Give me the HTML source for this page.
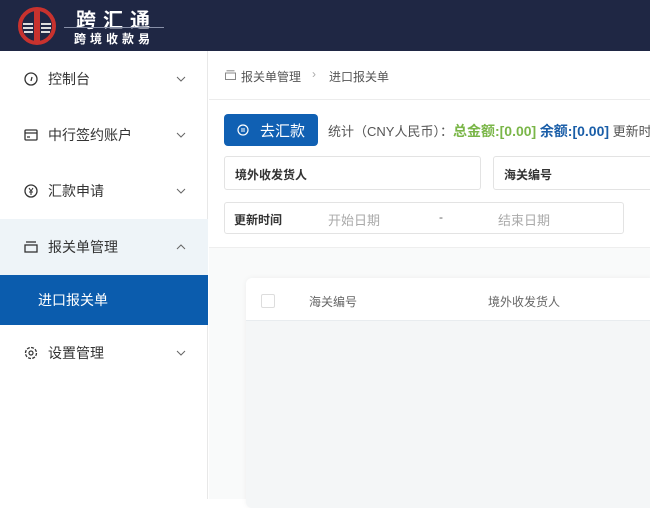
<!DOCTYPE html>
<html><head><meta charset="utf-8"><style>
*{margin:0;padding:0;box-sizing:border-box}
body{width:650px;height:499px;overflow:hidden;font-family:"Liberation Sans","Noto Sans CJK SC",sans-serif;background:#fff;position:relative;color:#333}
.hdr{position:absolute;left:0;top:0;width:650px;height:51px;background:#1f2744}
.side{position:absolute;left:0;top:51px;width:208px;height:448px;background:#fff;border-right:1px solid #e8e8e8}
.it{position:absolute;left:0;width:208px;height:56px;font-size:14px;color:#333}
.it .ic{position:absolute;left:24px;top:50%;transform:translateY(-50%)}
.it .t{position:absolute;left:48px;top:50%;transform:translateY(-50%)}
.it .ar{position:absolute;left:176px;top:50%;transform:translateY(-50%)}
.abs{position:absolute}
.inp{position:absolute;border:1px solid #e3e3e3;border-radius:3px;background:#fff;font-size:12px}
</style></head><body>
<div class="hdr">
<svg class="abs" style="left:17px;top:6px" width="40" height="40" viewBox="0 0 40 40"><circle cx="20" cy="20" r="17" fill="none" stroke="#c8322e" stroke-width="4"/><rect x="17" y="5" width="6" height="30" fill="#c8322e"/><path d="M6 18h10M6 22h10M24 18h10M24 22h10M7 26h9M24 26h9" stroke="#ddd" stroke-width="2"/></svg>
<div class="abs" style="left:76px;top:4px;color:#fff;font-size:20px;font-weight:bold;letter-spacing:7px">跨汇通</div>
<div class="abs" style="left:64px;top:27px;width:100px;height:1px;background:#8890a8"></div>
<div class="abs" style="left:74px;top:30px;color:#fff;font-size:12px;font-weight:bold;letter-spacing:4px">跨境收款易</div>
</div>
<div class="side">
<div class="it" style="top:0"><svg class="ic" width="14" height="14" viewBox="0 0 14 14"><circle cx="7" cy="7" r="6" fill="none" stroke="#333" stroke-width="1.3"/><path d="M7 9l1-4" stroke="#333" stroke-width="1.3"/></svg><span class="t">控制台</span><svg class="ar" width="10" height="6"><path d="M1 1l4 4 4-4" fill="none" stroke="#666"/></svg></div>
<div class="it" style="top:56px"><svg class="ic" width="14" height="12" viewBox="0 0 14 12"><rect x="1" y="1" width="12" height="10" rx="1" fill="none" stroke="#333" stroke-width="1.3"/><path d="M1 4h12M3 8h3" stroke="#333" stroke-width="1.3"/></svg><span class="t">中行签约账户</span><svg class="ar" width="10" height="6"><path d="M1 1l4 4 4-4" fill="none" stroke="#666"/></svg></div>
<div class="it" style="top:112px"><svg class="ic" width="14" height="14" viewBox="0 0 14 14"><circle cx="7" cy="7" r="6" fill="none" stroke="#333" stroke-width="1.3"/><path d="M5 4l2 3 2-3M7 7v4M5 8h4" stroke="#333" stroke-width="1.1" fill="none"/></svg><span class="t">汇款申请</span><svg class="ar" width="10" height="6"><path d="M1 1l4 4 4-4" fill="none" stroke="#666"/></svg></div>
<div class="it" style="top:168px;background:#eef4f8"><svg class="ic" width="14" height="12" viewBox="0 0 14 12"><rect x="1" y="4" width="12" height="7" fill="none" stroke="#333" stroke-width="1.3"/><path d="M2 1h10" stroke="#333" stroke-width="1.3"/></svg><span class="t">报关单管理</span><svg class="ar" width="10" height="6"><path d="M1 5l4-4 4 4" fill="none" stroke="#666"/></svg></div>
<div class="it" style="top:224px;height:50px;background:#0b5cad;color:#fff"><span class="t" style="left:38px">进口报关单</span></div>
<div class="it" style="top:274px"><svg class="ic" width="14" height="14" viewBox="0 0 14 14"><circle cx="7" cy="7" r="5.5" fill="none" stroke="#333" stroke-width="1.3" stroke-dasharray="3 1.3"/><circle cx="7" cy="7" r="2" fill="none" stroke="#333" stroke-width="1.2"/></svg><span class="t">设置管理</span><svg class="ar" width="10" height="6"><path d="M1 1l4 4 4-4" fill="none" stroke="#666"/></svg></div>
</div>
<div class="abs" style="left:209px;top:51px;width:441px;height:49px;border-bottom:1px solid #ececec;font-size:12px;color:#555">
<svg class="abs" style="left:16px;top:19px" width="11" height="10" viewBox="0 0 11 10"><rect x="0.5" y="3" width="10" height="6.5" fill="none" stroke="#888"/><path d="M1.5 0.8h8" stroke="#888"/></svg>
<span class="abs" style="left:32px;top:17px">报关单管理</span><span class="abs" style="left:103px;top:16px;color:#aaa">›</span><span class="abs" style="left:120px;top:17px">进口报关单</span>
</div>
<div class="abs" style="left:209px;top:247px;width:441px;height:252px;background:#f9fafa;border-top:1px solid #eee"></div>
<div class="abs" style="left:224px;top:114px;width:94px;height:32px;background:#1060b3;border-radius:4px;color:#fff;font-size:15px"><svg class="abs" style="left:13px;top:10px" width="12" height="12"><circle cx="6" cy="6" r="5" fill="none" stroke="#fff" stroke-width="1.2"/><path d="M4 5h4M8 7H4" stroke="#fff"/></svg><span class="abs" style="left:36px;top:6px">去汇款</span></div>
<div class="abs" style="left:328px;top:121px;font-size:13px;white-space:nowrap;color:#555">统计（CNY人民币）：<b style="color:#7ab648;font-size:14px">总金额:[0.00]</b> <b style="color:#1a5ea8;font-size:14px">余额:[0.00]</b> 更新时间</div>
<div class="inp" style="left:224px;top:156px;width:257px;height:34px"><span class="abs" style="left:10px;top:9px;color:#333;font-weight:bold">境外收发货人</span></div>
<div class="inp" style="left:493px;top:156px;width:170px;height:34px"><span class="abs" style="left:10px;top:9px;color:#333;font-weight:bold">海关编号</span></div>
<div class="inp" style="left:224px;top:202px;width:400px;height:32px"><span class="abs" style="left:9px;top:8px;color:#333;font-weight:bold">更新时间</span><span class="abs" style="left:103px;top:7px;color:#aaa;font-size:13px">开始日期</span><span class="abs" style="left:214px;top:7px;color:#666">-</span><span class="abs" style="left:273px;top:7px;color:#aaa;font-size:13px">结束日期</span></div>
<div class="abs" style="left:246px;top:278px;width:410px;height:230px;background:#f4f6f7;border-radius:6px;box-shadow:0 0 6px rgba(0,0,0,0.05)">
<div class="abs" style="left:0;top:0;width:410px;height:43px;background:#fff;border-bottom:1px solid #e8ecef;border-radius:6px 6px 0 0;font-size:12px;color:#666">
<div class="abs" style="left:15px;top:16px;width:14px;height:14px;border:1px solid #ddd;border-radius:2px"></div>
<span class="abs" style="left:63px;top:15px">海关编号</span><span class="abs" style="left:242px;top:15px">境外收发货人</span>
</div></div>
</body></html>
